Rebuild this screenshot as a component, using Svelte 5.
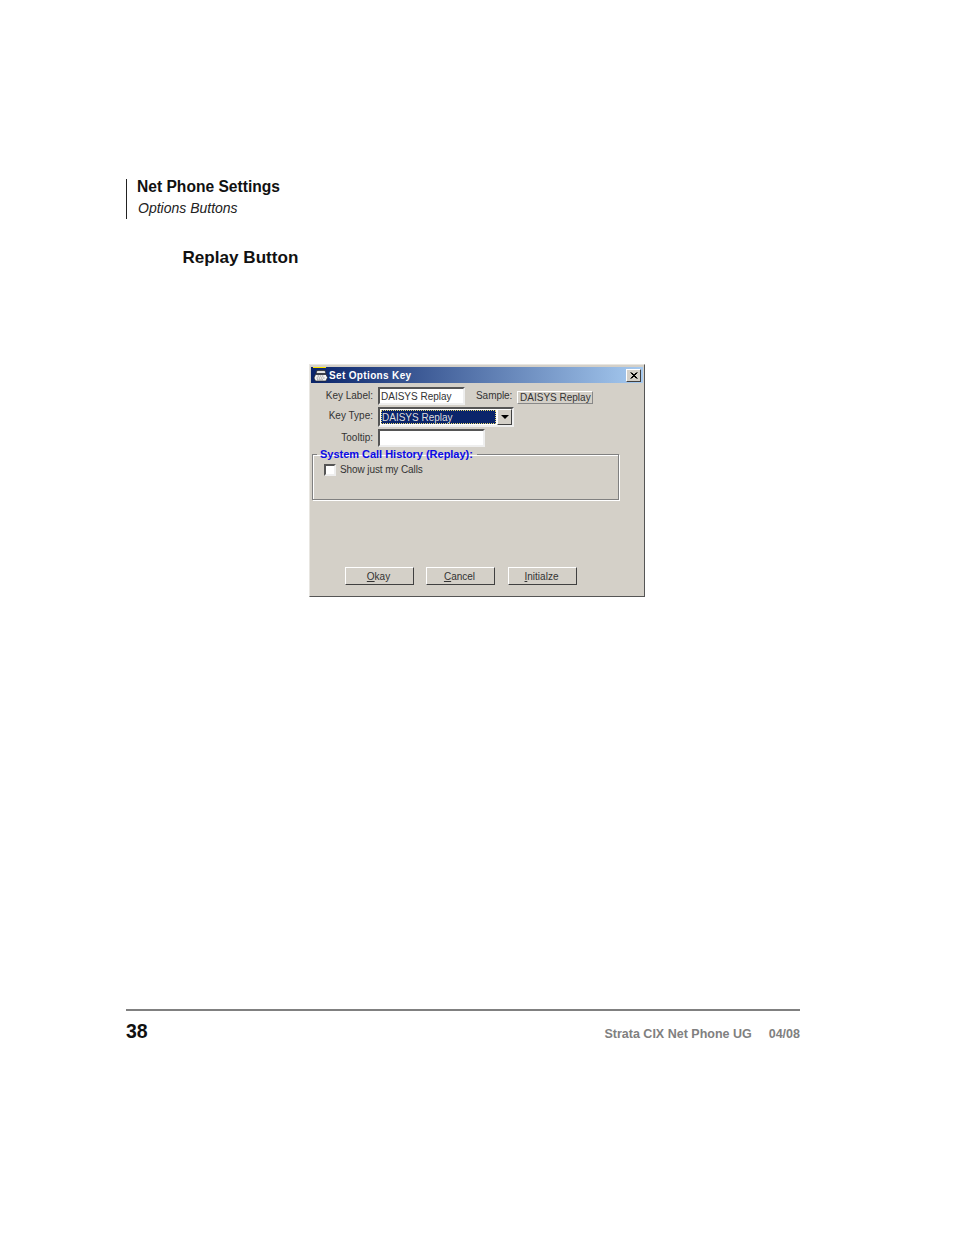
<script>
	let showMine = $state(false);
</script>

<main class="page">
	<header class="running-head">
		<h1>Net Phone Settings</h1>
		<p>Options Buttons</p>
	</header>

	<h2>Replay Button</h2>

	<div class="dialog">
		<div class="titlebar">
			<svg class="app-icon" viewBox="0 0 17 16" width="17" height="16">
				<rect x="1" y="0" width="13" height="1" fill="#ffe600" />
				<path d="M5 3.5h8l1 3H4z" fill="#e4e4e4" stroke="#222" stroke-width="0.7" />
				<path d="M3.5 7.5h10.500l1.500 3-1.500 3.500h-10.500l-1.500-3z" fill="#f6f6f6" stroke="#222" stroke-width="0.7" />
				<path d="M5.500 9h6.500M4.500 11h8.500M5 12.800h6.500" stroke="#777" stroke-width="0.8" stroke-dasharray="1.500 0.700" />
			</svg>
			<span class="title">Set Options Key</span>
			<button class="close" aria-label="Close">
				<svg viewBox="0 0 8 7" width="8" height="7">
					<path d="M0.5 0.5l6 6M1.5 0.5l6 6M6.5 0.5l-6 6M7.5 0.5l-6 6" stroke="#000" stroke-width="1" fill="none" />
				</svg>
			</button>
		</div>

		<div class="form">
			<div class="row row-label">
				<label for="key-label">Key Label:</label>
				<input id="key-label" class="sunken w-label" type="text" value="DAISYS Replay" />
				<span class="sample-label">Sample:</span>
				<button class="raised sample">DAISYS Replay</button>
			</div>
			<div class="row row-type">
				<label for="key-type">Key Type:</label>
				<div class="combo" id="key-type">
					<span class="combo-value"><span class="focus">DAISYS Replay</span></span>
					<span class="combo-arrow"><i></i></span>
				</div>
			</div>
			<div class="row row-tooltip">
				<label for="tooltip">Tooltip:</label>
				<input id="tooltip" class="sunken w-tooltip" type="text" />
			</div>

			<fieldset>
				<legend>System Call History (Replay):</legend>
				<label class="check">
					<input type="checkbox" bind:checked={showMine} />
					<span class="box"></span>
					<span>Show just my Calls</span>
				</label>
			</fieldset>
		</div>

		<div class="actions">
			<button class="raised action"><u>O</u>kay</button>
			<button class="raised action"><u>C</u>ancel</button>
			<button class="raised action"><u>I</u>nitialze</button>
		</div>
	</div>

	<footer>
		<span class="page-no">38</span>
		<span class="doc">Strata CIX Net Phone UG</span>
		<span class="date">04/08</span>
	</footer>
</main>

<style>
	:global(body) {
		margin: 0;
		background: #fff;
		font-family: 'Liberation Sans', Arial, sans-serif;
	}

	.page {
		height: 1235px;
		box-sizing: border-box;
		padding: 179px 154px 0 126px;
		color: #111;
		overflow: hidden;
	}

	.running-head {
		height: 40px;
		box-sizing: border-box;
		border-left: 1px solid #222;
		padding-left: 10px;
	}

	h1 {
		margin: 0;
		font-size: 15.6px;
		line-height: 16px;
		font-weight: bold;
	}

	.running-head p {
		margin: 5px 0 0 1px;
		font-size: 14px;
		line-height: 16px;
		font-style: italic;
		color: #222;
	}

	h2 {
		margin: 29px 0 0 56.5px;
		font-size: 17.1px;
		line-height: 20px;
		font-weight: bold;
	}

	.dialog {
		width: 336px;
		height: 233px;
		box-sizing: border-box;
		margin: 96px 0 0 183px;
		position: relative;
		display: flex;
		flex-direction: column;
		background: #d4d0c8;
		border: 1px solid;
		border-color: #e8e6e1 #555 #555 #e8e6e1;
		padding: 2px 1px 11px;
		font-size: 10px;
		color: #333;
	}

	.titlebar {
		height: 16px;
		flex: none;
		display: flex;
		align-items: center;
		background: linear-gradient(90deg, #0a246a, #a6caf0);
		color: #fff;
		font-weight: bold;
		font-size: 10px;
		letter-spacing: 0.35px;
		padding: 0 2px 0 1px;
	}

	.app-icon {
		flex: none;
	}

	.title {
		flex: 1;
	}

	.close {
		width: 15px;
		height: 13px;
		padding: 0;
		display: flex;
		align-items: center;
		justify-content: center;
		background: #d4d0c8;
		border: 1px solid;
		border-color: #fff #404040 #404040 #fff;
	}

	.form {
		flex: 1;
		padding-top: 4px;
	}

	.row {
		display: flex;
		align-items: center;
	}

	.row label {
		width: 62px;
		flex: none;
		margin-right: 5px;
		text-align: right;
	}

	.row-label {
		height: 18px;
	}

	.row-label label {
		margin-top: -2px;
	}

	.row-type {
		height: 20px;
		margin-top: 2px;
	}

	.row-type label {
		margin-top: -3px;
	}

	.row-tooltip {
		height: 18px;
		margin-top: 2px;
	}

	.row-tooltip label {
		margin-top: -1px;
	}

	.sunken {
		height: 18px;
		box-sizing: border-box;
		margin: 0;
		padding: 0 0 0 1px;
		background: #fff;
		border: 2px solid;
		border-color: #555 #eee #eee #555;
		font: 10px 'Liberation Sans', Arial, sans-serif;
		color: #333;
		outline: none;
	}

	.w-label {
		width: 87px;
	}

	.w-tooltip {
		width: 107px;
	}

	.sample-label {
		margin-left: 11px;
		margin-top: -2px;
		letter-spacing: -0.05px;
	}

	.raised {
		box-sizing: border-box;
		padding: 0;
		background: #d4d0c8;
		border: 1px solid;
		border-color: #fff #404040 #404040 #fff;
		font: 10px 'Liberation Sans', Arial, sans-serif;
		color: #333;
		white-space: nowrap;
	}

	.sample {
		width: 76px;
		height: 13px;
		margin: 2px 0 0 5px;
		line-height: 11px;
		border-color: #fff #888 #888 #fff;
	}

	.combo {
		width: 136px;
		height: 20px;
		box-sizing: border-box;
		display: flex;
		border: 2px solid;
		border-color: #555 #eee #eee #555;
		background: #fff;
	}

	.combo-value {
		flex: 1;
		margin: 1px;
		background: #0a246a;
		color: #fff;
		display: flex;
	}

	.focus {
		flex: 1;
		line-height: 13px;
		font-size: 10px;
		border: 1px dotted #e8d870;
		color: #ddd;
	}

	.combo-arrow {
		width: 15px;
		box-sizing: border-box;
		display: flex;
		align-items: center;
		justify-content: center;
		background: #d4d0c8;
		border: 1px solid;
		border-color: #fff #404040 #404040 #fff;
	}

	.combo-arrow i {
		width: 0;
		height: 0;
		border-left: 4px solid transparent;
		border-right: 4px solid transparent;
		border-top: 4px solid #000;
	}

	fieldset {
		width: 307px;
		height: 53px;
		box-sizing: border-box;
		margin: 0 0 0 1px;
		padding: 0 0 0 11px;
		border: 1px solid #808080;
		box-shadow: 1px 1px 0 #fff, inset 1px 1px 0 #fff;
		min-width: 0;
	}

	legend {
		margin-left: -7px;
		padding: 1px 4px 0 3px;
		color: #0a0ae6;
		font-weight: bold;
		font-size: 11px;
		line-height: 13px;
		letter-spacing: -0.02px;
	}

	.check {
		display: flex;
		align-items: center;
		gap: 4px;
		margin-top: 2px;
		height: 13px;
		letter-spacing: -0.1px;
	}

	.check input {
		position: absolute;
		opacity: 0;
		margin: 0;
		width: 12px;
		height: 12px;
	}

	.box {
		width: 12px;
		height: 12px;
		box-sizing: border-box;
		background: #fff;
		border: 2px solid;
		border-color: #555 #eee #eee #555;
	}

	.actions {
		flex: none;
		display: flex;
		padding-left: 34px;
	}

	.action {
		width: 69px;
		height: 18px;
		margin-right: 12px;
		padding: 1px 2px 0 0;
		line-height: 16px;
	}

	.action:last-child {
		margin-right: 0;
		margin-left: 1px;
	}

	footer {
		margin-top: 412px;
		height: 30px;
		display: flex;
		align-items: baseline;
		border-top: 2px solid #808080;
		color: #808080;
		font-weight: bold;
		font-size: 12.5px;
	}

	.page-no {
		flex: 1;
		font-size: 19.5px;
		line-height: 40px;
		color: #111;
	}

	.date {
		margin-left: 17px;
	}
</style>
